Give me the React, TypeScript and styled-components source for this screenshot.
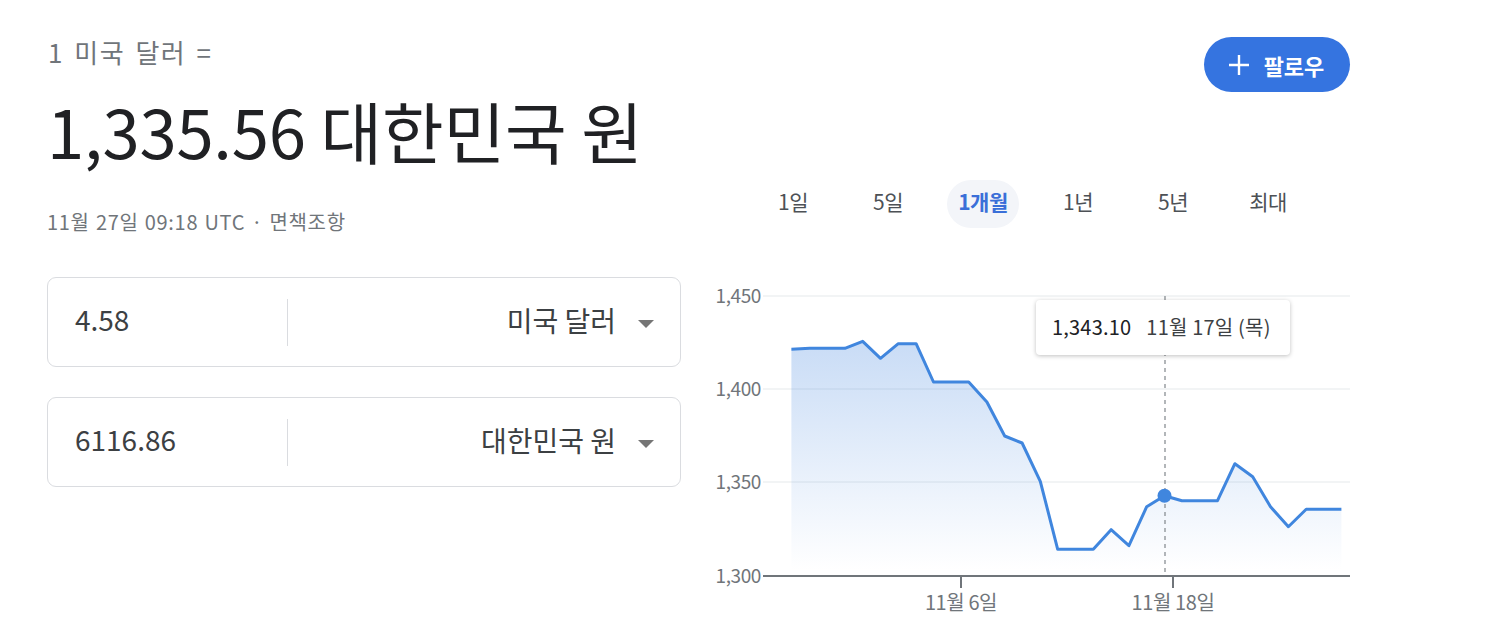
import React from "react";
import styled, { createGlobalStyle } from "styled-components";

const Global = createGlobalStyle`
  html, body { margin: 0; padding: 0; background: #fff; }
  body { font-family: "Noto Sans CJK KR", "Noto Sans", sans-serif; }
  * { box-sizing: border-box; }
`;

const Page = styled.div`
  display: grid;
  grid-template-columns: 634px 650px;
  column-gap: 19px;
  padding-left: 47px;
  width: 1490px;
  height: 636px;
  overflow: hidden;
`;

const LeftCol = styled.div`
  display: flex;
  flex-direction: column;
  padding-top: 37px;
`;

const Subtitle = styled.div`
  font-size: 26px;
  line-height: 30px;
  color: #70757a;
  padding-left: 1px;
  letter-spacing: 1.5px;
  word-spacing: 3px;
`;

const Price = styled.div`
  margin-top: 25px;
  font-size: 67px;
  line-height: 76px;
  color: #202124;
  letter-spacing: -0.2px;
`;

const Stamp = styled.div`
  margin-top: 42px;
  font-size: 20px;
  line-height: 24px;
  color: #70757a;
  letter-spacing: 0.7px;
  word-spacing: 1px;
`;

const Inputs = styled.div`
  margin-top: 43px;
  display: flex;
  flex-direction: column;
  gap: 30px;
`;

const Box = styled.div`
  height: 90px;
  border: 1px solid #dadce0;
  border-radius: 9px;
  display: flex;
  align-items: center;
`;

const Value = styled.div`
  width: 239px;
  padding-left: 27px;
  font-size: 28px;
  line-height: 32px;
  margin-top: -6px;
  color: #3c4043;
  letter-spacing: 0;
`;

const Divider = styled.div`
  width: 1px;
  height: 47px;
  background: #dadce0;
`;

const Currency = styled.div`
  flex: 1;
  display: flex;
  justify-content: flex-end;
  align-items: center;
  padding-right: 26px;
  font-size: 28px;
  line-height: 32px;
  margin-top: -5px;
  color: #3c4043;
  letter-spacing: 0;
`;

const Caret = styled.span`
  margin-left: 22px;
  width: 0;
  height: 0;
  border-left: 8px solid transparent;
  border-right: 8px solid transparent;
  border-top: 8px solid #757575;
  margin-top: 8px;
`;

const RightCol = styled.div`
  display: flex;
  flex-direction: column;
`;

const FollowButton = styled.button`
  align-self: flex-end;
  margin-top: 37px;
  height: 55px;
  width: 146px;
  border: none;
  border-radius: 28px;
  background: #3574e0;
  color: #fff;
  display: flex;
  align-items: center;
  justify-content: center;
  gap: 14px;
  font-family: inherit;
  font-size: 22px;
  font-weight: 700;
  padding: 0 2px 0 0;
`;

const Tabs = styled.div`
  margin-top: 88px;
  margin-left: 57px;
  display: flex;
  gap: 23px;
`;

const Tab = styled.div<{ $active?: boolean }>`
  width: 72px;
  height: 48px;
  border-radius: 24px;
  display: flex;
  align-items: center;
  justify-content: center;
  font-size: 21px;
  line-height: 24px;
  padding-bottom: 6px;
  letter-spacing: -0.5px;
  color: ${(p) => (p.$active ? "#3a6fd8" : "#4d5156")};
  font-weight: ${(p) => (p.$active ? 700 : 400)};
  background: ${(p) => (p.$active ? "#f3f5f9" : "transparent")};
`;

const ChartWrap = styled.div`
  position: relative;
  margin-top: 52px;
  width: 650px;
  height: 340px;
`;

const Tooltip = styled.div`
  position: absolute;
  left: 336px;
  top: 20px;
  width: 254px;
  height: 55px;
  background: #fff;
  border-radius: 4px;
  box-shadow: 0 1px 4px rgba(0, 0, 0, 0.25);
  display: flex;
  align-items: center;
  padding-left: 16px;
  padding-bottom: 2px;
  gap: 15px;
  font-size: 20px;
  letter-spacing: 0.2px;
`;

const TipValue = styled.span`
  color: #202124;
`;

const TipDate = styled.span`
  color: #3c4043;
`;

const points: [number, number][] = [
  [91.4, 69.3], [109.7, 68.3], [144.9, 68.3], [162.7, 61.3], [180.5, 78.3],
  [198.3, 63.7], [216.1, 63.7], [233.5, 102], [268.7, 102], [286.9, 122],
  [304.7, 156], [322.1, 163], [340.3, 201.3], [357.7, 269.3], [393.3, 269.3],
  [411.1, 249.7], [428.9, 265.7], [446.7, 226.7], [464.5, 215.7], [481.9, 220.7],
  [517.5, 220.7], [534.9, 183.7], [552.7, 196.7], [570.5, 226.7], [588.4, 246.7],
  [606.2, 229.3], [641.4, 229.3],
];

const linePath = points.map((p, i) => `${i ? "L" : "M"}${p[0]} ${p[1]}`).join(" ");
const areaPath = `${linePath} L641.4 296 L91.4 296 Z`;

const yTicks = [
  { y: 16, label: "1,450" },
  { y: 109, label: "1,400" },
  { y: 202, label: "1,350" },
  { y: 296, label: "1,300" },
];

const AXIS_FONT = "Noto Sans CJK KR, sans-serif";

const Chart = () => (
  <svg width="650" height="340" viewBox="0 0 650 340">
    <defs>
      <linearGradient id="fill" x1="0" y1="61" x2="0" y2="290" gradientUnits="userSpaceOnUse">
        <stop offset="0" stopColor="#4a8ae0" stopOpacity="0.3" />
        <stop offset="1" stopColor="#4a8ae0" stopOpacity="0" />
      </linearGradient>
    </defs>
    {yTicks.slice(0, 3).map((t) => (
      <line key={t.y} x1="63" x2="650" y1={t.y} y2={t.y} stroke="#eef0f2" strokeWidth="1.5" />
    ))}
    {yTicks.map((t) => (
      <text
        key={t.label}
        x="61"
        y={t.y + 7}
        textAnchor="end"
        fontSize="19"
        fill="#70757a"
        fontFamily={AXIS_FONT}
        letterSpacing="-0.4"
      >
        {t.label}
      </text>
    ))}
    <path d={areaPath} fill="url(#fill)" />
    <line x1="465" x2="465" y1="16" y2="296" stroke="#80868b" strokeWidth="1.2" strokeDasharray="4 4" />
    <path d={linePath} fill="none" stroke="#4086de" strokeWidth="3" strokeLinejoin="round" />
    <circle cx="464.5" cy="215.7" r="7" fill="#4086de" />
    <line x1="63" x2="650" y1="296" y2="296" stroke="#70757a" strokeWidth="2" />
    <line x1="261" x2="261" y1="296" y2="308" stroke="#70757a" strokeWidth="2" />
    <line x1="473" x2="473" y1="296" y2="308" stroke="#70757a" strokeWidth="2" />
    <text x="261" y="330" textAnchor="middle" fontSize="20" fill="#70757a" fontFamily={AXIS_FONT} letterSpacing="-0.4">
      11월 6일
    </text>
    <text x="473" y="330" textAnchor="middle" fontSize="20" fill="#70757a" fontFamily={AXIS_FONT} letterSpacing="-0.4">
      11월 18일
    </text>
  </svg>
);

const PlusIcon = () => (
  <svg width="22" height="22" viewBox="0 0 22 22">
    <path d="M11 1v20M1 11h20" stroke="#fff" strokeWidth="2.4" />
  </svg>
);

const tabs = ["1일", "5일", "1개월", "1년", "5년", "최대"];

export default function App() {
  return (
    <>
      <Global />
      <Page>
        <LeftCol>
          <Subtitle>1 미국 달러 =</Subtitle>
          <Price>1,335.56 대한민국 원</Price>
          <Stamp>11월 27일 09:18 UTC · 면책조항</Stamp>
          <Inputs>
            <Box>
              <Value>4.58</Value>
              <Divider />
              <Currency>
                미국 달러
                <Caret />
              </Currency>
            </Box>
            <Box>
              <Value>6116.86</Value>
              <Divider />
              <Currency>
                대한민국 원
                <Caret />
              </Currency>
            </Box>
          </Inputs>
        </LeftCol>
        <RightCol>
          <FollowButton>
            <PlusIcon />
            팔로우
          </FollowButton>
          <Tabs>
            {tabs.map((t) => (
              <Tab key={t} $active={t === "1개월"}>
                {t}
              </Tab>
            ))}
          </Tabs>
          <ChartWrap>
            <Chart />
            <Tooltip>
              <TipValue>1,343.10</TipValue>
              <TipDate>11월 17일 (목)</TipDate>
            </Tooltip>
          </ChartWrap>
        </RightCol>
      </Page>
    </>
  );
}
